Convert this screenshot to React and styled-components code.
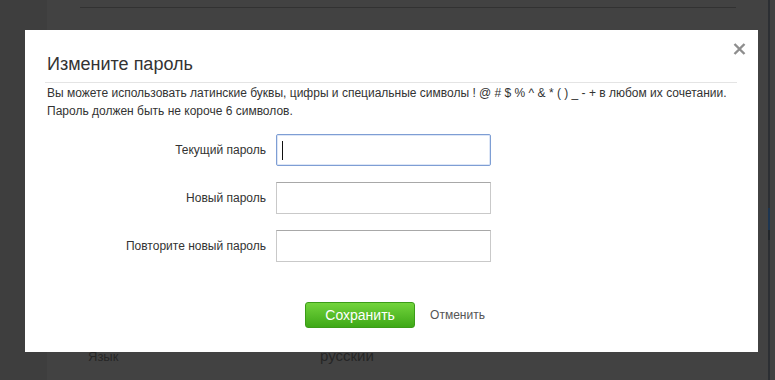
import React from 'react';
import styled, { createGlobalStyle } from 'styled-components';

const GlobalStyle = createGlobalStyle`
  html, body {
    margin: 0;
    padding: 0;
    background: #424242;
  }
  body {
    font-family: "Liberation Sans", Arial, sans-serif;
  }
`

const Page = styled.div`
  position: relative;
  display: flex;
  width: 775px;
  height: 380px;
  overflow: hidden;
  background: #424242;
`

const Sidebar = styled.div`
  width: 47px;
  flex-shrink: 0;
  background: #3e3e3e;
`

const Content = styled.div`
  flex: 1;
  display: flex;
  flex-direction: column;
  padding-top: 7px;
`

const Rule = styled.div`
  margin: 0 32px 0 33px;
  height: 1px;
  background: #323232;
`

const SettingRow = styled.div`
  margin-top: auto;
  display: grid;
  grid-template-columns: 232px auto;
  align-items: baseline;
  padding: 0 0 14px 41px;
  color: #262626;
`

const SettingName = styled.span`
  font-size: 13px;
  line-height: 18px;
`

const SettingValue = styled.span`
  font-size: 15px;
  line-height: 18px;
`

const ScrollTrack = styled.div`
  width: 5px;
  flex-shrink: 0;
  border-left: 2px solid #2c2f33;
`

const Thumb = styled.div`
  margin: 208px 0 0 -2px;
  width: 2px;
  height: 22px;
  background: #1d3550;
  border-bottom: 10px solid #22262a;
`

const Modal = styled.div`
  position: absolute;
  left: 25px;
  top: 30px;
  width: 733px;
  height: 322px;
  box-sizing: border-box;
  padding: 22px 21px 0 20px;
  background: #fff;
  color: #333;
`

const Close = styled.button`
  position: absolute;
  top: 12px;
  left: 706px;
  padding: 0;
  width: 16px;
  height: 14px;
  border: 0;
  background: none;
  display: flex;
  align-items: center;
  justify-content: center;
  cursor: pointer;
`

const Title = styled.h2`
  margin: 0;
  padding: 0 0 6px 2px;
  font-size: 18px;
  line-height: 24px;
  font-weight: normal;
  color: #333;
  border-bottom: 1px solid #e4e4e4;
`

const Hint = styled.p`
  margin: 1px 0 0 2px;
  font-size: 12px;
  line-height: 18px;
  color: #333;
`

const Form = styled.div`
  display: grid;
  grid-template-columns: 221px 215px;
  column-gap: 10px;
  row-gap: 16px;
  margin-top: 14px;
  align-items: center;
`

const Label = styled.label`
  text-align: right;
  font-size: 12px;
  color: #333;
`

const Field = styled.div`
  position: relative;
  height: 32px;
`

const Input = styled.input`
  display: block;
  box-sizing: border-box;
  width: 100%;
  height: 32px;
  margin: 0;
  padding: 0 6px;
  font: 13px "Liberation Sans", Arial, sans-serif;
  outline: none;
  border: 1px solid ${p => (p.$focused ? '#7e9ed4' : '#c9c9c9')};
  border-top-color: ${p => (p.$focused ? '#7e9ed4' : '#a8a8a8')};
  border-radius: ${p => (p.$focused ? '2px' : '0')};
  box-shadow: ${p => (p.$focused ? 'inset 0 0 0 1px #dde6f6' : 'none')};
  background: #fff;
`

const Caret = styled.span`
  position: absolute;
  left: 6px;
  top: 7px;
  width: 1px;
  height: 19px;
  background: #111;
`

const Actions = styled.div`
  display: flex;
  justify-content: center;
  align-items: center;
  gap: 15px;
  margin-top: 40px;
  padding-left: 8px;
`

const SaveButton = styled.button`
  width: 110px;
  height: 26px;
  padding: 0;
  border: 1px solid #3b9c18;
  border-radius: 3px;
  background: linear-gradient(#72d43c, #3ea817);
  color: #fff;
  font: 14px "Liberation Sans", Arial, sans-serif;
  cursor: pointer;
`

const CancelLink = styled.a`
  font-size: 12px;
  color: #555;
  text-decoration: none;
  cursor: pointer;
`

const fields = [
  { id: 'current', label: 'Текущий пароль', focused: true },
  { id: 'new', label: 'Новый пароль' },
  { id: 'repeat', label: 'Повторите новый пароль' },
]

function App() {
  return (
    <Page>
      <GlobalStyle />
      <Sidebar />
      <Content>
        <Rule />
        <SettingRow>
          <SettingName>Язык</SettingName>
          <SettingValue>русский</SettingValue>
        </SettingRow>
      </Content>
      <ScrollTrack>
        <Thumb />
      </ScrollTrack>

      <Modal>
        <Close aria-label="Закрыть">
          <svg width="13" height="12" viewBox="0 0 13 12">
            <path d="M1.5 1 L11.5 11 M11.5 1 L1.5 11" stroke="#8e8e8e" strokeWidth="2.4" />
          </svg>
        </Close>
        <Title>Измените пароль</Title>
        <Hint>
          Вы можете использовать латинские буквы, цифры и специальные символы ! @ # $ % ^ &amp; * ( ) _ - + в любом их сочетании.
          <br />
          Пароль должен быть не короче 6 символов.
        </Hint>
        <Form>
          {fields.map(f => (
            <React.Fragment key={f.id}>
              <Label htmlFor={f.id}>{f.label}</Label>
              <Field>
                <Input id={f.id} type="password" $focused={f.focused} />
                {f.focused && <Caret />}
              </Field>
            </React.Fragment>
          ))}
        </Form>
        <Actions>
          <SaveButton>Сохранить</SaveButton>
          <CancelLink>Отменить</CancelLink>
        </Actions>
      </Modal>
    </Page>
  )
}

export default App;
